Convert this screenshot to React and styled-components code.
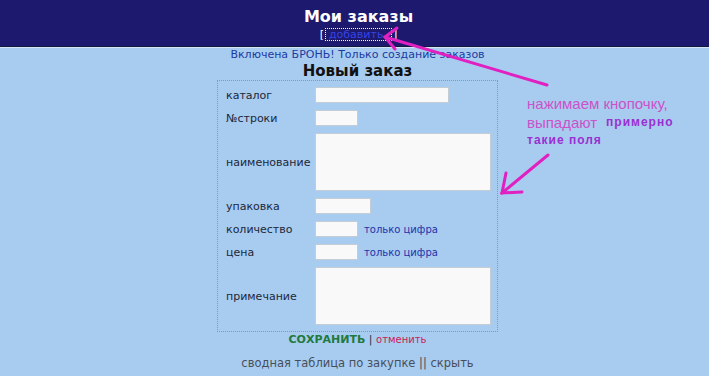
import React from "react";
import styled, { createGlobalStyle } from "styled-components";

const GlobalStyle = createGlobalStyle`
  html, body {
    margin: 0;
    padding: 0;
    background: #a8cbf0;
  }
  body {
    font-family: "DejaVu Sans", Verdana, sans-serif;
  }
`;

const Page = styled.div`
  position: relative;
  width: 709px;
  height: 376px;
  overflow: hidden;
  background: #a8cbf0;
`;

const Header = styled.div`
  height: 46px;
  background: #1c196e;
  border-bottom: 1px solid #0d1c3c;
  box-shadow: 0 1px 0 #d6e4f6;
  display: flex;
  flex-direction: column;
  align-items: center;
  padding-left: 8px;
`;

const Title = styled.h1`
  margin: 8px 0 0;
  font-size: 16px;
  line-height: 18px;
  font-weight: bold;
  color: #ffffff;
`;

const LinkLine = styled.div`
  margin-top: 2px;
  font-size: 11px;
  line-height: 13px;
  color: #ffffff;
  display: flex;
  align-items: center;
`;

const FocusLink = styled.span`
  display: inline-block;
  width: 67px;
  margin: 0 1px;
  outline: 1px dotted #ffffff;
  outline-offset: -1px;
  color: #3444e6;
  text-align: left;
  padding-left: 4px;
  box-sizing: border-box;
`;

const Main = styled.div`
  display: flex;
  flex-direction: column;
  align-items: center;
  padding-left: 6px;
`;

const Notice = styled.div`
  margin-top: 1px;
  font-size: 11px;
  line-height: 14px;
  color: #1b3ca2;
`;

const Subtitle = styled.h2`
  margin: 0;
  font-size: 15px;
  line-height: 18px;
  font-weight: bold;
  color: #111;
`;

const FormBox = styled.div`
  width: 281px;
  box-sizing: border-box;
  border: 1px dotted #7f98b4;
  padding: 6px 6px 6px 8px;
  display: grid;
  grid-template-columns: 89px 1fr;
  row-gap: 7px;
  align-items: center;
`;

const Label = styled.div`
  font-size: 11px;
  color: #1c2838;
  white-space: nowrap;
`;

const Field = styled.div`
  display: flex;
  align-items: center;
`;

const Input = styled.input`
  width: ${(p) => p.$w}px;
  height: 16px;
  box-sizing: border-box;
  border: 1px solid #c4ccd6;
  background: #f9f9f9;
  padding: 0;
  margin: 0;
`;

const Area = styled.textarea`
  width: 176px;
  height: 58px;
  box-sizing: border-box;
  border: 1px solid #c4ccd6;
  background: #f9f9f9;
  padding: 0;
  margin: 0;
  resize: none;
  display: block;
`;

const Hint = styled.span`
  margin-left: 6px;
  font-size: 10px;
  color: #2233aa;
`;

const Actions = styled.div`
  margin-top: 1px;
  font-size: 11px;
  line-height: 14px;
  color: #334;
`;

const Save = styled.span`
  font-weight: bold;
  color: #1f7a3c;
`;

const Cancel = styled.span`
  font-size: 10px;
  color: #cc2255;
`;

const Footer = styled.div`
  margin-top: 9px;
  font-size: 11.5px;
  line-height: 14px;
  color: #47505a;
`;

const Note = styled.div`
  position: absolute;
  left: 527px;
  top: 94px;
  font-family: "Liberation Sans", Arial, sans-serif;
  display: flex;
  flex-direction: column;
`;

const NoteLine = styled.div`
  height: ${(p) => p.$h || 19}px;
  display: flex;
  align-items: center;
  white-space: nowrap;
`;

const Pink = styled.span`
  font-size: 15px;
  color: #cc52c8;
`;

const Purple = styled.span`
  font-size: 12px;
  font-weight: bold;
  letter-spacing: 1px;
  color: #9a30d0;
  margin-left: ${(p) => p.$ml || 0}px;
`;

const Overlay = styled.svg`
  position: absolute;
  left: 0;
  top: 0;
  pointer-events: none;
`;

const rows = [
  { label: "каталог", w: 134 },
  { label: "№строки", w: 43 },
  { label: "наименование", area: true },
  { label: "упаковка", w: 56 },
  { label: "количество", w: 43, hint: true },
  { label: "цена", w: 43, hint: true },
  { label: "примечание", area: true },
];

export default function App() {
  return (
    <Page>
      <GlobalStyle />
      <Header>
        <Title>Мои заказы</Title>
        <LinkLine>
          [<FocusLink>добавить</FocusLink>]
        </LinkLine>
      </Header>
      <Main>
        <Notice>Включена БРОНЬ! Только создание заказов</Notice>
        <Subtitle>Новый заказ</Subtitle>
        <FormBox>
          {rows.map((r) => (
            <React.Fragment key={r.label}>
              <Label>{r.label}</Label>
              <Field>
                {r.area ? <Area /> : <Input $w={r.w} />}
                {r.hint && <Hint>только цифра</Hint>}
              </Field>
            </React.Fragment>
          ))}
        </FormBox>
        <Actions>
          <Save>СОХРАНИТЬ</Save> | <Cancel>отменить</Cancel>
        </Actions>
        <Footer>сводная таблица по закупке || скрыть</Footer>
      </Main>
      <Note>
        <NoteLine>
          <Pink>нажимаем кнопочку,</Pink>
        </NoteLine>
        <NoteLine $h={18}>
          <Pink>выпадают</Pink>
          <Purple $ml={9}>примерно</Purple>
        </NoteLine>
        <NoteLine $h={18}>
          <Purple>такие поля</Purple>
        </NoteLine>
      </Note>
      <Overlay width="709" height="376" viewBox="0 0 709 376">
        <g stroke="#e020c0" strokeWidth="3" strokeLinecap="round" fill="none">
          <line x1="547" y1="85" x2="385" y2="37" />
          <polyline points="397,28 385,37 395,49" />
          <line x1="548" y1="155" x2="502" y2="193" />
          <polyline points="506,173 502,193 522,192" />
        </g>
      </Overlay>
    </Page>
  );
}
